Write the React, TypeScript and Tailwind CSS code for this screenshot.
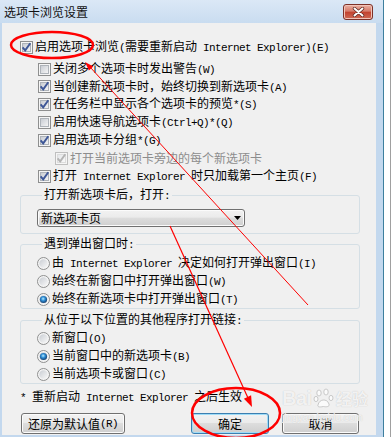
import React from 'react';

// ascii runs get the narrow mono face, the rest stays CJK
const Txt = ({ s }: { s: string }) => (
  <>
    {s.split(/([\x20-\x7e]+)/).map((part, i) =>
      /^[\x20-\x7e]+$/.test(part) ? (
        <span
          key={i}
          className="font-['Liberation_Mono',monospace] text-[11px] tracking-[-0.6px] whitespace-pre"
        >
          {part}
        </span>
      ) : (
        <span key={i}>{part}</span>
      )
    )}
  </>
);

const CheckBox = ({ checked, disabled }: { checked?: boolean; disabled?: boolean }) => (
  <svg width="13" height="13" viewBox="0 0 13 13" className="shrink-0">
    <defs>
      <linearGradient id="cbfill" x1="0" y1="0" x2="1" y2="1">
        <stop offset="0" stopColor="#c6cad1" />
        <stop offset="1" stopColor="#f7f7f7" />
      </linearGradient>
      <linearGradient id="cbfilloff" x1="0" y1="0" x2="1" y2="1">
        <stop offset="0" stopColor="#e4e6e9" />
        <stop offset="1" stopColor="#fafafa" />
      </linearGradient>
    </defs>
    <rect x="0.5" y="0.5" width="12" height="12" fill="#f5f5f5" stroke={disabled ? '#bfbfbf' : '#8e8f8f'} />
    <rect x="2.5" y="2.5" width="8" height="8" fill={disabled ? 'url(#cbfilloff)' : 'url(#cbfill)'} stroke={disabled ? '#dcdcdc' : '#aeb3b9'} />
    {checked && (
      <path
        d="M2.6 6.4 L5.2 9.4 L10.3 2.2"
        stroke={disabled ? '#b4b4b4' : '#3e5797'}
        strokeWidth="1.9"
        fill="none"
      />
    )}
  </svg>
);

const Radio = ({ on }: { on?: boolean }) => (
  <svg width="13" height="13" viewBox="0 0 13 13" className="shrink-0">
    <defs>
      <linearGradient id="rdfill" x1="0" y1="0" x2="1" y2="1">
        <stop offset="0" stopColor="#c9cdd3" />
        <stop offset="1" stopColor="#f8f8f8" />
      </linearGradient>
      <radialGradient id="rddot" cx="0.45" cy="0.4" r="0.6">
        <stop offset="0" stopColor="#b8ecff" />
        <stop offset="0.45" stopColor="#2f8ed6" />
        <stop offset="1" stopColor="#143e6e" />
      </radialGradient>
    </defs>
    <circle cx="6.5" cy="6.5" r="6" fill="#f4f4f4" stroke="#8e8f8f" />
    <circle cx="6.5" cy="6.5" r="4.2" fill="url(#rdfill)" />
    {on && <circle cx="6.5" cy="6.5" r="3.6" fill="url(#rddot)" />}
  </svg>
);

const CheckRow = ({
  label,
  checked,
  disabled,
  className,
}: {
  label: string;
  checked?: boolean;
  disabled?: boolean;
  className: string;
}) => (
  <div className={`flex items-center gap-[2px] leading-[18px] whitespace-nowrap ${className}`}>
    <CheckBox checked={checked} disabled={disabled} />
    <span className={disabled ? 'text-[#8d8d8d]' : 'text-black'}>
      <Txt s={label} />
    </span>
  </div>
);

const RadioRow = ({ label, on }: { label: string; on?: boolean }) => (
  <div className="flex items-center h-[18px] gap-[2px] leading-[18px] whitespace-nowrap">
    <Radio on={on} />
    <span>
      <Txt s={label} />
    </span>
  </div>
);

const Button = ({ label, main, className }: { label: string; main?: boolean; className: string }) => (
  <button
    className={`h-[21px] rounded-[3px] border flex items-center justify-center leading-[14px] bg-[linear-gradient(#f2f2f2,#ebebeb_45%,#dddddd_50%,#cfcfcf)] ${
      main
        ? 'border-[#3c7fb1] shadow-[inset_0_0_0_1px_#9fdcf7]'
        : 'border-[#707070] shadow-[inset_0_0_0_1px_#fbfbfb]'
    } ${className}`}
  >
    <Txt s={label} />
  </button>
);

export default function App() {
  return (
    <div className="relative w-[392px] h-[437px] bg-white overflow-hidden font-['Noto_Sans_CJK_SC',sans-serif] text-[12px] text-black">
      <div className="flex h-full">
        {/* window */}
        <div className="w-[384px] h-full flex flex-col bg-[#c3d8ee] border-r border-[#3d7f9e]">
          {/* title bar */}
          <div className="h-[23px] flex justify-between pl-[4px] pr-[10px] bg-[linear-gradient(#dbe8f6,#c9dcf0)]">
            <span className="leading-[23px] text-[12px] text-[#111]">选项卡浏览设置</span>
            <div className="mt-[4px] w-[30px] h-[16px] rounded-[3px] border border-[#7d3128] bg-[linear-gradient(#eab0a3,#d67a69_45%,#c2412e_50%,#cf6a55)] flex items-center justify-center shadow-[inset_0_0_0_1px_#f1c4b9]">
              <svg width="13" height="10" viewBox="0 0 13 10">
                <path d="M2.5 1.5 L10.5 8.5 M10.5 1.5 L2.5 8.5" stroke="#5b241d" strokeWidth="3.4" strokeLinecap="round" />
                <path d="M2.5 1.5 L10.5 8.5 M10.5 1.5 L2.5 8.5" stroke="#ffffff" strokeWidth="2" strokeLinecap="round" />
              </svg>
            </div>
          </div>

          {/* client area */}
          <div className="flex-1 ml-[2px] mr-[7px] mb-[2px] bg-[#f0f0f0] flex flex-col pl-[18px] pt-[15px]">
            <CheckRow className="h-[18px]" checked label="启用选项卡浏览(需要重新启动 Internet Explorer)(E)" />
            <div className="flex flex-col pl-[18px] mt-[4px]">
              <CheckRow className="h-[18px]" label="关闭多个选项卡时发出警告(W)" />
              <CheckRow className="h-[17px]" checked label="当创建新选项卡时，始终切换到新选项卡(A)" />
              <CheckRow className="h-[18px]" checked label="在任务栏中显示各个选项卡的预览*(S)" />
              <CheckRow className="h-[18px]" label="启用快速导航选项卡(Ctrl+Q)*(Q)" />
              <CheckRow className="h-[18px]" checked label="启用选项卡分组*(G)" />
              <CheckRow className="h-[18px] pl-[17px]" checked disabled label="打开当前选项卡旁边的每个新选项卡" />
              <CheckRow className="h-[18px]" checked label="打开 Internet Explorer 时只加载第一个主页(F)" />
            </div>

            <fieldset className="mt-[2px] w-[340px] border border-[#d5dfe5] rounded-[3px] pl-[16px] pt-[6px] pb-[6px]">
              <legend className="ml-[5px] px-[2px] leading-[14px] whitespace-nowrap">
                <Txt s="打开新选项卡后，打开:" />
              </legend>
              <div className="relative w-[208px] h-[18px] rounded-[3px] border border-[#707070] bg-[linear-gradient(#f2f2f2,#ebebeb_45%,#dddddd_50%,#cfcfcf)] shadow-[inset_0_0_0_1px_#fbfbfb] flex items-center pl-[3px] leading-[14px]">
                新选项卡页
                <svg width="7" height="4" viewBox="0 0 7 4" className="absolute right-[3px] top-[6px]">
                  <path d="M0 0 H7 L3.5 4 Z" fill="#000" />
                </svg>
              </div>
            </fieldset>

            <fieldset className="mt-[2px] w-[340px] border border-[#d5dfe5] rounded-[3px] pl-[16px] pt-[2px]">
              <legend className="ml-[5px] px-[2px] leading-[14px] whitespace-nowrap">
                <Txt s="遇到弹出窗口时:" />
              </legend>
              <RadioRow label="由 Internet Explorer 决定如何打开弹出窗口(I)" />
              <RadioRow label="始终在新窗口中打开弹出窗口(W)" />
              <RadioRow on label="始终在新选项卡中打开弹出窗口(T)" />
            </fieldset>

            <fieldset className="mt-[3px] w-[340px] border border-[#d5dfe5] rounded-[3px] pl-[16px] pt-[1px]">
              <legend className="ml-[5px] px-[2px] leading-[14px] whitespace-nowrap">
                <Txt s="从位于以下位置的其他程序打开链接:" />
              </legend>
              <RadioRow label="新窗口(O)" />
              <RadioRow on label="当前窗口中的新选项卡(B)" />
              <RadioRow label="当前选项卡或窗口(C)" />
            </fieldset>

            <div className="mt-[5px] leading-[14px] whitespace-nowrap">
              <Txt s="* 重新启动 Internet Explorer 之后生效" />
            </div>

            <div className="mt-[8px] flex">
              <Button className="ml-[1px] w-[104px]" label="还原为默认值(R)" />
              <Button className="ml-[66px] w-[78px]" main label="确定" />
              <Button className="ml-[13px] w-[77px]" label="取消" />
            </div>
          </div>
        </div>
        <div className="flex-1 pt-[19px] flex justify-end pr-[1px]">
          <div className="w-px h-full bg-[#a0a0a0]" />
        </div>
      </div>

      {/* baidu watermark */}
      <div className="absolute left-[282px] top-[388px] flex flex-col items-start pointer-events-none text-white/80 [text-shadow:0_0_1px_#b8b8b8]">
        <div className="flex items-end leading-[20px]">
          <span className="font-['Liberation_Sans',sans-serif] font-bold text-[20px] tracking-[-0.5px]">Bai</span>
          <svg width="22" height="20" viewBox="0 0 22 20" className="mx-[1px]">
            <g fill="#ffffff" fillOpacity="0.75" stroke="#bdbdbd" strokeWidth="0.8">
              <ellipse cx="6" cy="5" rx="2.2" ry="3" />
              <ellipse cx="13" cy="4" rx="2.2" ry="3" />
              <ellipse cx="3" cy="11" rx="2" ry="2.6" />
              <ellipse cx="18" cy="10" rx="2" ry="2.6" />
              <path d="M5 17 C6 11 14 10 16 16 C17 19 13 19 10.5 18.5 C8 19 4 19.5 5 17 Z" />
            </g>
          </svg>
          <span className="text-[16px] font-bold leading-[20px]">经验</span>
        </div>
        <span className="mt-[4px] font-['Liberation_Sans',sans-serif] text-[10px] leading-[12px]">jingyan.baidu.com</span>
      </div>

      {/* red annotations */}
      <svg className="absolute inset-0 pointer-events-none" width="392" height="437" viewBox="0 0 392 437">
        <ellipse cx="52" cy="45" rx="41" ry="13" fill="none" stroke="#ff0000" strokeWidth="2.5" />
        <ellipse cx="236" cy="413" rx="44" ry="25" fill="none" stroke="#ff0000" strokeWidth="2.5" />
        <line x1="308" y1="305" x2="90" y2="67" stroke="#ff0000" strokeWidth="1" />
        <polygon points="85,62 93.3,66.6 88.9,70.6" fill="#ff0000" />
        <line x1="170" y1="226" x2="248" y2="398" stroke="#ff0000" strokeWidth="1.2" />
        <polygon points="252,407 251.1,395.3 243.9,398.7" fill="#ff0000" />
      </svg>
    </div>
  );
}
